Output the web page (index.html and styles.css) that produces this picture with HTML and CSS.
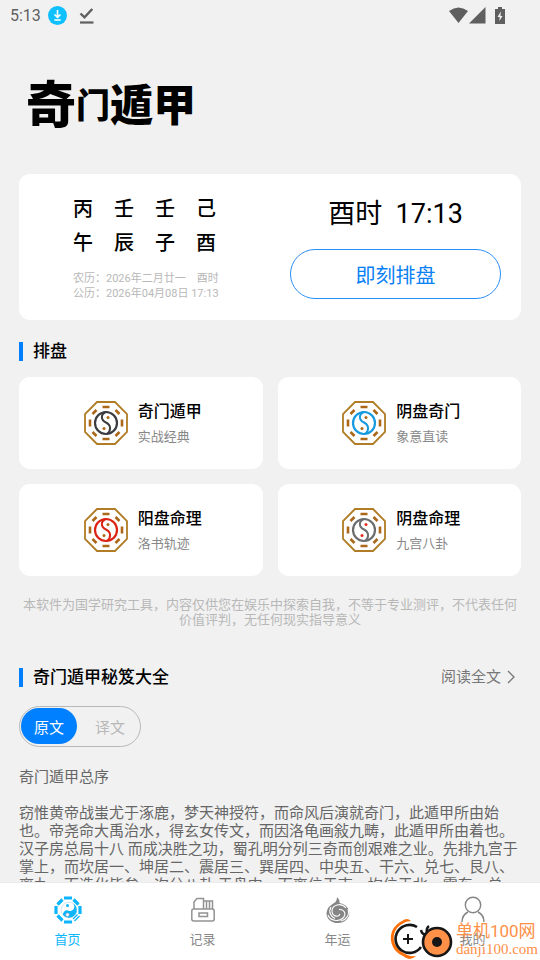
FILE: index.html
```
<!DOCTYPE html>
<html lang="zh-CN">
<head>
    <meta charset="UTF-8" />
    <meta name="viewport" content="width=device-width, initial-scale=1" />
    <title>奇门遁甲</title>
    <link rel="stylesheet" href="styles.css">
</head>
<body>
    <svg class="defs" aria-hidden="true">
        <symbol id="bagua" viewBox="0 0 44 44">
            <path d="M13 1H31L43 13V31L31 43H13L1 31V13Z" fill="#fff" stroke="#b07c25" stroke-width="1.8"/>
            <g stroke="#ac6818" stroke-width="2.6">
                <path d="M18.5 6H25.5M18.5 38H25.5M6 18.5V25.5M38 18.5V25.5M8.500 13L12.500 9M31.500 9L35.500 13M8.500 31L12.500 35M31.500 35L35.500 31"/>
            </g>
            <circle cx="22" cy="22" r="11" fill="none" stroke="currentColor" stroke-width="2.2"/>
            <path d="M22 11C16.500 13 16.500 19 22 21.500S27 30.500 23 33" fill="none" stroke="currentColor" stroke-width="2"/>
            <circle class="dot" cx="24" cy="16.500" r="1.5"/>
            <circle class="dot" cx="20" cy="27.500" r="1.5"/>
        </symbol>
    </svg>

    <header class="status">
        <span class="clock">5:13</span>
        <svg width="19" height="19" viewBox="0 0 19 19">
            <circle cx="9.500" cy="9.500" r="9.500" fill="#0fc0ff"/>
            <path d="M9.500 4V11M6.500 8.500L9.500 11.300L12.500 8.500M6.300 14H12.700" fill="none" stroke="#fff" stroke-width="1.6"/>
        </svg>
        <svg width="15" height="17" viewBox="0 0 15 17">
            <path d="M1.500 6.500L5.500 10.300L13.300 2" fill="none" stroke="#5f5f5f" stroke-width="2.400"/>
            <path d="M1 15.500H14.500" stroke="#5f5f5f" stroke-width="2.200"/>
        </svg>
        <span class="signals">
            <svg width="19" height="17" viewBox="0 0 19 17"><path d="M0 4Q9.500-3 19 4L9.500 16Z" fill="#5f5f5f"/></svg>
            <svg width="17" height="17" viewBox="0 0 17 17"><path d="M16.500 0V16.500H0Z" fill="#5f5f5f"/></svg>
            <svg class="battery" width="10" height="17" viewBox="0 0 10 17">
                <path d="M3 0H7V2H10V17H0V2H3Z" fill="#5f5f5f"/>
                <path d="M5.800 4.500L2.500 10H4.700L4.400 14L7.500 9H5.500Z" fill="#f1f1f1"/>
            </svg>
        </span>
    </header>

    <main>
        <h1 class="logo"><span class="big">奇</span><span class="small">门</span><span>遁</span><span>甲</span></h1>

        <section class="today">
            <div class="date">
                <div class="pillars">
                    <span>丙</span><span>壬</span><span>壬</span><span>己</span>
                    <span>午</span><span>辰</span><span>子</span><span>酉</span>
                </div>
                <p>农历：2026年二月廿一 &nbsp;&nbsp; 酉时</p>
                <p>公历：2026年04月08日 17:13</p>
            </div>
            <div class="now">
                <div class="time">酉时&nbsp; 17:13</div>
                <button type="button" class="start">即刻排盘</button>
            </div>
        </section>

        <h2 class="title">排盘</h2>
        <section class="cards">
            <a class="card" href="#qimen">
                <svg class="bagua dark"><use href="#bagua"/></svg>
                <span><b>奇门遁甲</b><small>实战经典</small></span>
            </a>
            <a class="card" href="#yinpan">
                <svg class="bagua blue"><use href="#bagua"/></svg>
                <span><b>阴盘奇门</b><small>象意直读</small></span>
            </a>
            <a class="card" href="#yangming">
                <svg class="bagua red"><use href="#bagua"/></svg>
                <span><b>阳盘命理</b><small>洛书轨迹</small></span>
            </a>
            <a class="card" href="#yinming">
                <svg class="bagua gray"><use href="#bagua"/></svg>
                <span><b>阴盘命理</b><small>九宫八卦</small></span>
            </a>
        </section>
        <p class="notice">本软件为国学研究工具，内容仅供您在娱乐中探索自我，不等于专业测评，不代表任何价值评判，无任何现实指导意义</p>

        <div class="book-head">
            <h2 class="title">奇门遁甲秘笈大全</h2>
            <a class="more" href="#book">阅读全文
                <svg width="8" height="14" viewBox="0 0 8 14"><path d="M1 1L7 7L1 13" fill="none" stroke="#777" stroke-width="1.3"/></svg>
            </a>
        </div>
        <div class="switch">
            <button type="button" class="on" aria-pressed="true">原文</button>
            <button type="button" aria-pressed="false">译文</button>
        </div>
        <article class="book">
            <h3>奇门遁甲总序</h3>
            <p>窃惟黄帝战蚩尤于涿鹿，梦天神授符，而命风后演就奇门，此遁甲所由始也。帝尧命大禹治水，得玄女传文，而因洛龟画敍九畴，此遁甲所由着也。汉子房总局十八 而成决胜之功，蜀孔明分列三奇而创艰难之业。先排九宫于掌上，而坎居一、坤居二、震居三、巽居四、中央五、干六、兑七、艮八、离九，而造化毕矣，次分八卦 于盘中，而离位于南，坎位于北，震东，兑西，</p>
        </article>
    </main>

    <nav class="tabs">
        <a class="active" href="#home">
            <svg width="28" height="28" viewBox="0 0 28 28">
                <path d="M10 2H18M10 26H18M2 10V18M26 10V18M3.500 8.500L8.500 3.500M19.500 3.500L24.500 8.500M3.500 19.500L8.500 24.500" fill="none" stroke="#0db5fb" stroke-width="3.200"/>
                <path d="M19 23L23.500 18.500M20.500 25L25.500 20" stroke="#0db5fb" stroke-width="1.300"/>
                <circle cx="15" cy="14" r="7.800" fill="#fff" stroke="#c6ddea" stroke-width=".8"/>
                <path d="M18 6.800A7.800 7.800 0 1 1 9 19A4 4 0 0 1 14 14.500A4.200 4.200 0 0 0 18 6.800Z" fill="#0db5fb"/>
                <circle cx="13.500" cy="9.500" r="1.500" fill="#0db5fb"/>
                <circle cx="13.500" cy="18.800" r="1.700" fill="#fff" stroke="#c998ac" stroke-width=".5"/>
            </svg>
            首页
        </a>
        <a href="#records">
            <svg width="28" height="28" viewBox="0 0 28 28" fill="none" stroke="#929292" stroke-width="1.500">
                <rect x="2.800" y="13" width="22.400" height="12" rx="2"/>
                <path d="M5 13V6L8 2.500H14.500V13M14.500 5H23.500V13M17.500 5.500V13M20.500 5.500V13"/>
                <rect x="10" y="17" width="8.500" height="3.500"/>
            </svg>
            记录
        </a>
        <a href="#luck">
            <svg width="28" height="28" viewBox="0 0 28 28" fill="none">
                <path d="M13 1Q16 4 15.500 7Q19 7.500 22 10C29 17 24 27 14 27C6 27 1 21 3 15C4 10 9 8 11.500 6Q13 4 13 1Z" fill="#858585"/>
                <path d="M22 12C17 6 8 9 8 15C8 20 14 22 16 18M4 19C6 25 15 26 19 22C23 18 20 13 15 13.500M7 11C4 16 7 21 11 22.500M24 13C26 19 22 24 17 25" stroke="#fff" stroke-width="1.100"/>
            </svg>
            年运
        </a>
        <a href="#mine">
            <svg width="28" height="28" viewBox="0 0 28 28" fill="none" stroke="#858585" stroke-width="1.400">
                <circle cx="14" cy="9" r="7.700"/>
                <path d="M9 16Q3 19 3 26M19 16Q25 19 25 26"/>
            </svg>
            我的
        </a>
    </nav>

    <div class="watermark">
        <svg width="64" height="42" viewBox="0 0 64 42" fill="none">
            <path d="M21 3Q17-1 12 3C-3 10-3 31 13 38Q20 44 26 38Q18 39 12 34C1 27 1 12 12 6Q16 3 21 3Z" fill="#ff7108"/>
            <path d="M27 9A14 14 0 1 0 31 29" stroke="#161616" stroke-width="2.600"/>
            <path d="M31 12Q32 17 36 16M39 8Q36 10 37 15" stroke="#161616" stroke-width="2.500"/>
            <path d="M18 16V26M13 21H23" stroke="#161616" stroke-width="2"/>
            <circle cx="47" cy="24" r="14" fill="#ff9047" stroke="#161616" stroke-width="2.600"/>
            <circle cx="47" cy="24" r="5" fill="#161616"/>
        </svg>
        <div><strong>单机100网</strong><em>danji100.com</em></div>
    </div>
</body>
</html>
```
FILE: styles.css
```
*{
    margin: 0;
    padding: 0;
    box-sizing: border-box;
}
body{
    height: 100vh;
    display: flex;
    flex-direction: column;
    position: relative;
    overflow: hidden;
    background: #f1f1f1;
    color: #000;
    font-family: Roboto,"Noto Sans CJK SC",sans-serif;
}
a{
    color: inherit;
    text-decoration: none;
}
button{
    font-family: inherit;
    background: none;
    border: none;
    cursor: pointer;
}
.defs{
    position: absolute;
    width: 0;
    height: 0;
}
.status{
    flex: none;
    height: 31px;
    padding: 0 35px 0 10px;
    display: flex;
    align-items: center;
    color: #5f5f5f;
}
.clock{
    width: 38px;
    font-size: 16px;
}
.status > svg + svg{
    margin-left: 12px;
}
.signals{
    display: flex;
    gap: 1px;
    margin-left: auto;
}
.signals .battery{
    margin-left: 8px;
}
main{
    flex: 1;
    min-height: 0;
    overflow: hidden;
    padding: 0 19px;
}
.logo{
    height: 143px;
    padding: 6px 7px 0;
    display: flex;
    align-items: center;
    font-size: 43px;
    font-weight: 900;
    line-height: 60px;
}
.logo .big{
    font-size: 50px;
}
.logo .small{
    font-size: 34px;
}
.today{
    display: flex;
    height: 146px;
    border-radius: 11px;
    background: #fff;
}
.date{
    width: 50%;
    padding: 18px 0 0 54px;
    color: #b8b8b8;
    font-size: 11px;
    line-height: 15px;
}
.pillars{
    display: grid;
    grid-template-columns: repeat(4, 20px);
    column-gap: 21px;
    margin-bottom: 11px;
    color: #000;
    font-size: 20px;
    font-weight: 500;
    line-height: 34px;
}
.now{
    width: 50%;
    padding: 21px 20px 0;
    text-align: center;
}
.time{
    font-size: 27px;
    line-height: 38px;
    margin-bottom: 16px;
}
.start{
    width: 100%;
    height: 50px;
    border: 1px solid #2b8ff8;
    border-radius: 25px;
    color: #0a80f5;
    font-size: 20px;
}
.title{
    display: flex;
    align-items: center;
    font-size: 17px;
    font-weight: 500;
    line-height: 20px;
}
.title::before{
    content: "";
    width: 4px;
    height: 19px;
    margin-right: 10px;
    background: #007fff;
}
.today + .title{
    margin: 21px 0 16px;
}
.cards{
    display: grid;
    grid-template-columns: 1fr 1fr;
    gap: 15px;
}
.card{
    display: flex;
    align-items: center;
    justify-content: center;
    gap: 10px;
    height: 92px;
    padding-left: 4px;
    border-radius: 11px;
    background: #fff;
}
.card b,
.card small{
    display: block;
}
.card b{
    padding-top: 1px;
    font-size: 16px;
    font-weight: 500;
    line-height: 24px;
}
.card small{
    margin-top: 3px;
    color: #888;
    font-size: 13px;
    line-height: 20px;
}
.bagua{
    width: 44px;
    height: 44px;
    fill: #ac6818;
}
.dark{
    color: #3b3c40;
}
.blue{
    color: #1699df;
}
.red{
    color: #dc2414;
}
.gray{
    color: #6b6d6f;
    fill: #e32c1e;
}
.notice{
    margin: 21px 0 40px;
    color: #b8b8b8;
    font-size: 13px;
    line-height: 15px;
    text-align: center;
}
.book-head{
    display: flex;
    justify-content: space-between;
    align-items: center;
    height: 20px;
}
.more{
    display: flex;
    align-items: center;
    gap: 6px;
    padding-right: 6px;
    color: #777;
    font-size: 15px;
    line-height: 20px;
}
.switch{
    display: flex;
    width: 122px;
    height: 41px;
    margin-top: 19px;
    padding: 1px;
    border: 1px solid #b8b8b8;
    border-radius: 21px;
}
.switch button{
    width: 56px;
    height: 36px;
    border-radius: 18px;
    color: #b8b8b8;
    font-size: 15px;
}
.switch button + button{
    margin-left: 5px;
}
.switch .on{
    background: #007fff;
    color: #fff;
}
.book{
    margin-top: 21px;
    color: #666;
    font-size: 15px;
    line-height: 18px;
}
.book h3{
    margin-bottom: 18px;
    font-size: 15px;
    font-weight: normal;
}
.tabs{
    flex: none;
    height: 78px;
    display: flex;
    border-top: 1px solid #eaeaea;
    background: #fff;
}
.tabs a{
    flex: 1;
    display: flex;
    flex-direction: column;
    align-items: center;
    gap: 6px;
    padding-top: 13px;
    color: #888;
    font-size: 13px;
    line-height: 20px;
}
.tabs .active{
    color: #0db5fb;
}
.watermark{
    position: absolute;
    right: 2px;
    bottom: 0;
    display: flex;
    gap: 2px;
    height: 42px;
    color: #ff9047;
}
.watermark strong,
.watermark em{
    display: block;
    font-style: normal;
    white-space: nowrap;
}
.watermark strong{
    padding-top: 2px;
    font-size: 17px;
    font-weight: normal;
    line-height: 22px;
}
.watermark em{
    font-family: "Liberation Serif",serif;
    font-size: 15px;
    line-height: 15px;
}
```
